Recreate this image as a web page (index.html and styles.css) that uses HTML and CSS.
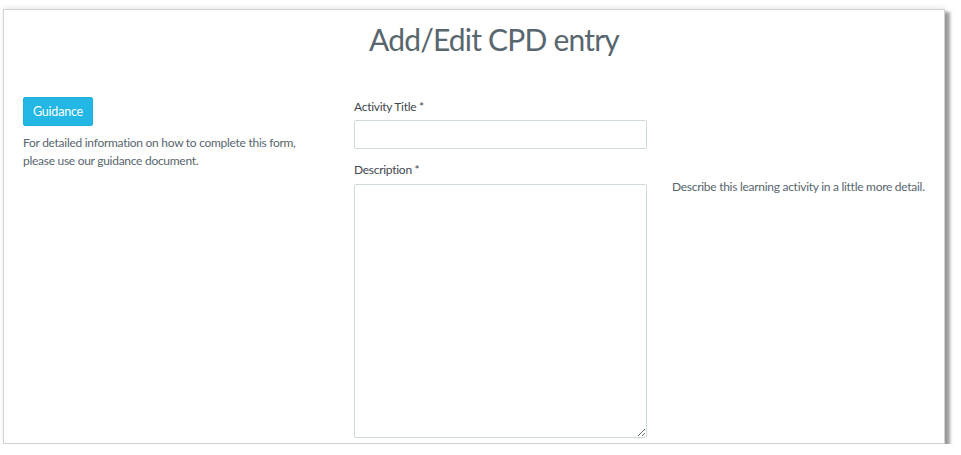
FILE: index.html
```html
<!DOCTYPE html>
<html>
<head>
<meta charset="utf-8">
<link rel="stylesheet" href="styles.css">
</head>
<body>
<div class="panel">
  <h1 class="title">Add/Edit CPD entry</h1>
  <div class="form-row">
    <div class="col-left">
      <button class="btn-guidance" type="button">Guidance</button>
      <p class="guide-text">For detailed information on how to complete this form, please use our guidance document.</p>
    </div>
    <div class="col-mid">
      <label class="field-label" for="title">Activity Title *</label>
      <input class="field-input" id="title" type="text">
      <label class="field-label label-desc" for="desc">Description *</label>
      <textarea class="field-area" id="desc"></textarea>
    </div>
    <div class="col-right">
      <p class="help-text">Describe this learning activity in a little more detail.</p>
    </div>
  </div>
</div>
</body>
</html>
```

FILE: styles.css
```css
html, body {
  margin: 0;
  padding: 0;
  background: #ffffff;
}
body {
  font-family: Lato, "Open Sans", "Liberation Sans", sans-serif;
  font-size: 12px;
  letter-spacing: -0.28px;
  color: #58666e;
}
.panel {
  margin: 9px 0 0 3px;
  width: 940px;
  height: 433px;
  background: #fff;
  border: 1px solid #d2d2d2;
  box-shadow: 5px 3px 3px rgba(0, 0, 0, 0.38), 0 -2px 4px rgba(0, 0, 0, 0.08);
  overflow: hidden;
}
.title {
  margin: 9px 0 0 0;
  padding-left: 40px;
  text-align: center;
  font-size: 30px;
  letter-spacing: -0.8px;
  line-height: 40px;
  font-weight: 400;
  color: #58666e;
}
.form-row {
  display: grid;
  grid-template-columns: 331px 318px 1fr;
  padding-left: 19px;
  margin-top: 38px;
}
.btn-guidance {
  display: block;
  width: 70px;
  height: 29px;
  padding: 0;
  border: 1px solid #1fb0dc;
  border-radius: 2px;
  background: #23b7e5;
  color: #fff;
  font-family: inherit;
  font-size: 12.5px;
  letter-spacing: -0.2px;
}
.guide-text {
  margin: 8px 0 0 0;
  width: 300px;
  line-height: 18px;
}
.col-mid {
  display: flex;
  flex-direction: column;
}
.field-label {
  display: block;
  line-height: 18px;
  padding-top: 1px;
  color: #3f474d;
  margin-bottom: 4px;
}
.label-desc {
  margin-top: 11px;
  margin-bottom: 5px;
}
.field-input {
  box-sizing: border-box;
  width: 293px;
  height: 29px;
  border: 1px solid #cfdadd;
  border-radius: 2px;
  margin: 0;
}
.field-area {
  box-sizing: border-box;
  width: 293px;
  height: 254px;
  border: 1px solid #cfdadd;
  border-radius: 2px;
  margin: 0;
  resize: vertical;
}
.help-text {
  margin: 81px 0 0 0;
  line-height: 18px;
}
```
